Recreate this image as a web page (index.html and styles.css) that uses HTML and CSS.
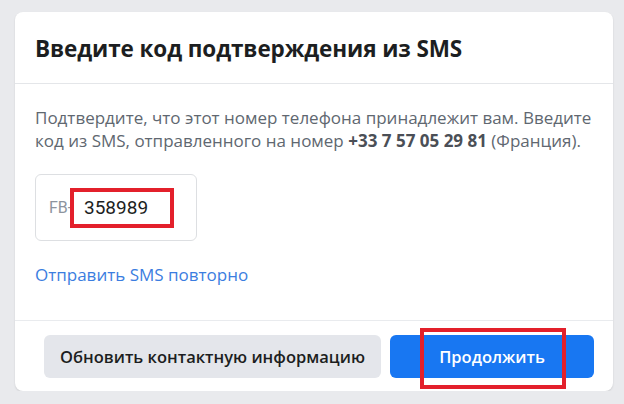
FILE: index.html
```html
<!DOCTYPE html>
<html lang="ru">
<head>
<meta charset="utf-8">
<link rel="stylesheet" href="styles.css">
</head>
<body>
<div class="card">
  <div class="card-header">
    <h2 class="title">Введите код подтверждения из SMS</h2>
  </div>
  <div class="card-body">
    <p class="desc">Подтвердите, что этот номер телефона принадлежит вам. Введите код из SMS, отправленного на номер <strong>+33 7 57 05 29 81</strong> (Франция).</p>
    <div class="code-field">
      <span class="prefix">FB-</span>
      <span class="code">358989</span>
      <span class="mark mark-code"></span>
    </div>
    <a class="resend" href="#">Отправить SMS повторно</a>
  </div>
  <div class="card-footer">
    <button class="btn btn-gray">Обновить контактную информацию</button>
    <button class="btn btn-blue">Продолжить<span class="mark mark-btn"></span></button>
  </div>
</div>
</body>
</html>
```
FILE: styles.css
```css
html, body {
  margin: 0;
  padding: 0;
  background: #e9eaed;
}
body {
  padding: 12px 11px 0 15px;
  font-family: "Open Sans", "Noto Sans", sans-serif;
  color: #1c1e21;
}
.card {
  background: #fff;
  border-radius: 8px;
  box-shadow: 0 1px 2px rgba(0,0,0,0.12);
  width: 598px;
}
.card-header {
  height: 72px;
  box-sizing: border-box;
  padding: 2px 20px 0 20px;
  display: flex;
  align-items: center;
  border-bottom: 1px solid #e4e6e9;
}
.title {
  margin: 0;
  font-size: 22.5px;
  font-weight: 700;
  color: #1c1e21;
  letter-spacing: -0.1px;
}
.card-body {
  padding: 22px 12px 0 20px;
  height: 236px;
  box-sizing: border-box;
}
.desc {
  margin: 0;
  font-size: 17px;
  line-height: 23px;
  color: #606770;
}
.desc strong {
  color: #4b4f56;
  font-weight: 700;
}
.code-field {
  position: relative;
  margin-top: 22px;
  width: 162px;
  height: 67px;
  box-sizing: border-box;
  border: 1px solid #dddfe2;
  border-radius: 6px;
  display: flex;
  align-items: center;
  padding-left: 13px;
}
.prefix {
  font-family: "Roboto", sans-serif;
  font-size: 16px;
  color: #8d949e;
  width: 35px;
}
.code {
  font-family: "Roboto", sans-serif;
  font-size: 19px;
  color: #1c1e21;
}
.mark {
  position: absolute;
  border: 4px solid #e3202b;
  box-sizing: border-box;
  pointer-events: none;
}
.mark-code {
  left: 34px;
  top: 13px;
  width: 104px;
  height: 40px;
}
.resend {
  display: inline-block;
  margin-top: 22px;
  font-size: 17px;
  color: #3b7de0;
  text-decoration: none;
}
.card-footer {
  border-top: 1px solid #e9ebee;
  height: 71px;
  box-sizing: border-box;
  padding: 14px 19px 0 29px;
  display: flex;
  gap: 9px;
}
.btn {
  height: 43px;
  border: none;
  border-radius: 6px;
  font-family: "Open Sans", "Noto Sans", sans-serif;
  font-size: 16.5px;
  font-weight: 600;
  cursor: pointer;
}
.btn-gray {
  width: 337px;
  background: #e4e6eb;
  color: #1c1e21;
}
.btn-blue {
  position: relative;
  width: 204px;
  background: #1877f2;
  color: #fff;
}
.mark-btn {
  left: 30px;
  top: -7px;
  width: 146px;
  height: 61px;
}
```
